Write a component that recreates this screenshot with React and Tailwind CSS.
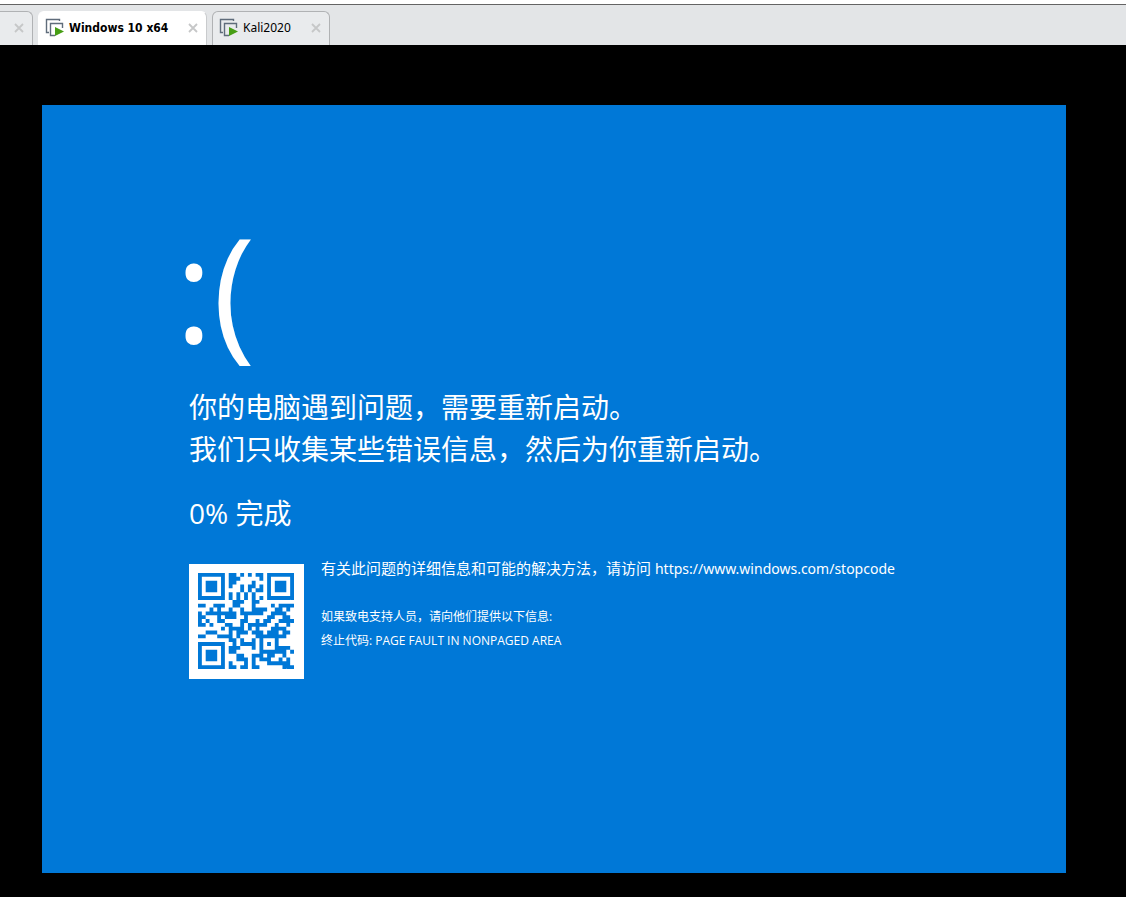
const STOP_URL = 'https://www.windows.com/stopcode';

const QR_SIZE = 25;
const EC_CODEWORDS = 10;
const FORMAT_BITS = '110011000101111'; // level L, mask 4

const gfMultiply = (a, b) => {
    let result = 0;
    for (let i = 7; i >= 0; i--) {
        result = (result << 1) ^ ((result >>> 7) * 0x11d);
        result ^= ((b >>> i) & 1) * a;
    }
    return result;
};

const errorCorrection = (data) => {
    const divisor = new Array(EC_CODEWORDS).fill(0);
    divisor[EC_CODEWORDS - 1] = 1;
    let root = 1;
    for (let i = 0; i < EC_CODEWORDS; i++) {
        for (let j = 0; j < EC_CODEWORDS; j++) {
            divisor[j] = gfMultiply(divisor[j], root);
            if (j + 1 < EC_CODEWORDS) divisor[j] ^= divisor[j + 1];
        }
        root = gfMultiply(root, 2);
    }

    const remainder = new Array(EC_CODEWORDS).fill(0);
    data.forEach((byte) => {
        const factor = byte ^ remainder.shift();
        remainder.push(0);
        divisor.forEach((coef, i) => {
            remainder[i] ^= gfMultiply(coef, factor);
        });
    });
    return remainder;
};

// version 2-L, byte mode, text of exactly 32 characters
const buildQr = (text) => {
    const grid = Array.from({ length: QR_SIZE }, () => new Array(QR_SIZE).fill(null));
    const set = (row, col, dark) => {
        if (row >= 0 && row < QR_SIZE && col >= 0 && col < QR_SIZE) grid[row][col] = dark;
    };

    for (let i = 0; i < QR_SIZE; i++) {
        set(6, i, i % 2 === 0);
        set(i, 6, i % 2 === 0);
    }

    [[3, 3], [3, 21], [21, 3]].forEach(([row, col]) => {
        for (let y = -4; y <= 4; y++) {
            for (let x = -4; x <= 4; x++) {
                const ring = Math.max(Math.abs(x), Math.abs(y));
                set(row + y, col + x, ring !== 2 && ring !== 4);
            }
        }
    });

    for (let y = -2; y <= 2; y++) {
        for (let x = -2; x <= 2; x++) {
            set(18 + y, 18 + x, Math.max(Math.abs(x), Math.abs(y)) !== 1);
        }
    }

    const format = [...FORMAT_BITS].map((bit) => bit === '1');
    for (let i = 0; i < 15; i++) {
        if (i < 6) set(8, i, format[i]);
        else if (i === 6) set(8, 7, format[i]);
        else if (i === 7) set(8, 8, format[i]);
        else if (i === 8) set(7, 8, format[i]);
        else set(14 - i, 8, format[i]);

        if (i < 7) set(24 - i, 8, format[i]);
        else set(8, 10 + i, format[i]);
    }
    set(17, 8, true);

    const toBits = (value, length) => value.toString(2).padStart(length, '0');
    const bitString =
        '0100' + toBits(text.length, 8) + [...text].map((c) => toBits(c.charCodeAt(0), 8)).join('') + '0000';
    const data = bitString.match(/.{8}/g).map((byte) => parseInt(byte, 2));
    const bits = [...data, ...errorCorrection(data)].map((byte) => toBits(byte, 8)).join('');

    let index = 0;
    for (let right = QR_SIZE - 1; right >= 1; right -= 2) {
        if (right === 6) right = 5;
        const upward = ((right + 1) & 2) === 0;
        for (let step = 0; step < QR_SIZE; step++) {
            const row = upward ? QR_SIZE - 1 - step : step;
            for (const col of [right, right - 1]) {
                if (grid[row][col] !== null) continue;
                const dark = bits[index++] === '1';
                const masked = (Math.floor(row / 2) + Math.floor(col / 3)) % 2 === 0;
                grid[row][col] = dark !== masked;
            }
        }
    }
    return grid;
};

const QrCode = ({ value }) => {
    const path = buildQr(value)
        .flatMap((cells, row) => cells.map((dark, col) => (dark ? `M${col} ${row}h1v1h-1z` : '')))
        .join('');

    return (
        <div className="w-[115px] shrink-0 bg-white pt-[9px] pr-2.5 pb-2.5 pl-[9px]">
            <svg viewBox="0 0 25 25" className="block w-full fill-[#0078d7]" role="img" aria-label="QR">
                <path d={path} />
            </svg>
        </div>
    );
};

const MachineIcon = () => (
    <svg width="20" height="20" viewBox="0 0 20 20" fill="none" className="shrink-0" aria-hidden="true">
        <path d="M4 14.5H1.5V1.5H14.5V3" stroke="#5f6c7b" strokeWidth="1.4" />
        <path d="M10 17.5H5.5V5.5H17.5V10" stroke="#5f6c7b" strokeWidth="1.4" />
        <path d="M10 9L19 13.5L10 18Z" fill="#479e15" />
    </svg>
);

const CloseButton = ({ label }) => (
    <button type="button" aria-label={label} className="ml-auto shrink-0 text-[#c6c7c8]">
        <svg width="10" height="10" viewBox="0 0 10 10" stroke="currentColor" strokeWidth="1.8">
            <path d="M1 1L9 9M9 1L1 9" />
        </svg>
    </button>
);

const Tab = ({ title, active, className }) => (
    <div
        className={`flex items-center rounded-t-md border border-b-0 pr-2 pb-0.5 ${
            active
                ? "border-[#c9cbcd] border-l-white border-t-white bg-white font-['DejaVu_Sans_Condensed','DejaVu_Sans',sans-serif] font-bold"
                : "border-[#b0b2b4] bg-[#e9ebed] font-['Noto_Sans','Open_Sans',sans-serif]"
        } ${className}`}
    >
        {title && (
            <button type="button" className="flex items-center gap-1 pl-1.5 whitespace-nowrap">
                <MachineIcon />
                {title}
            </button>
        )}
        <CloseButton label={`Close ${title || 'tab'}`} />
    </div>
);

export default function App() {
    return (
        <div className="flex min-h-screen flex-col bg-black">
            <header className="border-t-4 border-white bg-[#e3e5e7]">
                <nav className="flex h-[41px] border-t border-[#646464] pt-1.5 text-xs text-black">
                    <Tab className="-ml-2 w-[41px]" />
                    <Tab title="Windows 10 x64" active className="ml-[5px] w-[169px]" />
                    <Tab title="Kali2020" className="ml-[5px] w-[118px]" />
                </nav>
            </header>

            <main className="flex flex-1 flex-col pt-15 pr-15 pb-6 pl-[42px]">
                <section className="flex-1 bg-[#0078d7] px-[147px] pt-[92px] font-['Open_Sans','Noto_Sans_CJK_SC',sans-serif] text-white">
                    <div className="-ml-3.5 text-[144px] leading-[180px]">:(</div>
                    <h1 className="mt-[9px] text-[28px] leading-[42px]">
                        你的电脑遇到问题，需要重新启动。
                        <br />
                        我们只收集某些错误信息，然后为你重新启动。
                    </h1>
                    <p className="mt-[22px] text-[28px] leading-[42px]">0% 完成</p>

                    <div className="mt-[30px] flex gap-[17px]">
                        <QrCode value={STOP_URL} />
                        <div className="text-xs leading-6">
                            <p className="-mt-2 text-[15px] leading-6">
                                有关此问题的详细信息和可能的解决方法，请访问{' '}
                                <a href={STOP_URL} className="font-['Noto_Sans',sans-serif] text-sm leading-6">
                                    {STOP_URL}
                                </a>
                            </p>
                            <p className="mt-6">如果致电支持人员，请向他们提供以下信息:</p>
                            <p>终止代码: PAGE FAULT IN NONPAGED AREA</p>
                        </div>
                    </div>
                </section>
            </main>
        </div>
    );
}
